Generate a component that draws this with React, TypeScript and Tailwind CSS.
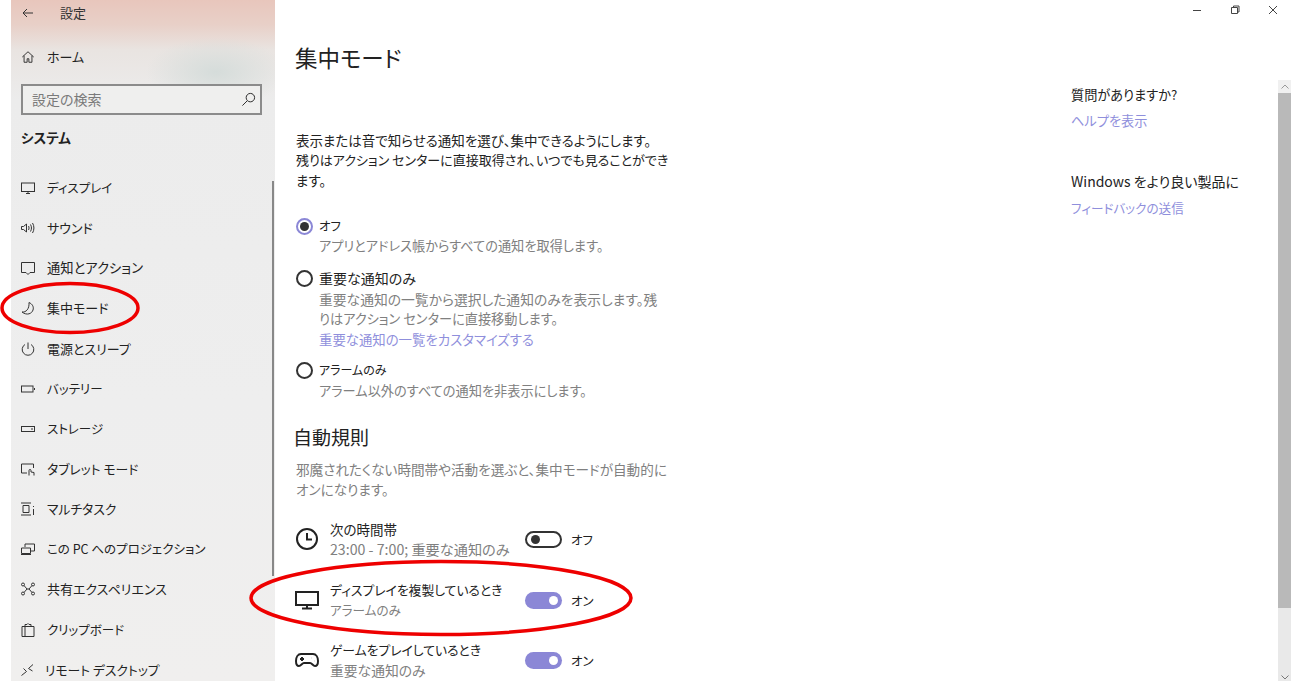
import React from "react";

const font = { fontFamily: '"Noto Sans CJK JP","Noto Sans",sans-serif' };

function I({ children, size = 16, vb = 16, cls = "" }: { children: React.ReactNode; size?: number; vb?: number; cls?: string }) {
  return (
    <svg width={size} height={size} viewBox={`0 0 ${vb} ${vb}`} fill="none" stroke="currentColor" strokeWidth="1" className={cls}>
      {children}
    </svg>
  );
}

const nav: [string, string, React.ReactNode][] = [
  ["ディスプレイ", "text-[12.5px]", <I><rect x="1.5" y="3" width="13" height="8.5" /><path d="M6 13.5h4M8 11.5v2" /></I>],
  ["サウンド", "text-[13px]", <I><path d="M1.5 6.5v3h2l3 2.5V4L3.5 6.5z" /><path d="M8.5 6c.7 1.2.7 2.8 0 4M10.5 4.5c1.3 2.2 1.3 4.8 0 7M12.5 3c1.9 3 1.9 7 0 10" /></I>],
  ["通知とアクション", "text-[13.3px]", <I><path d="M1.5 2.5h13v10H10l-2 2-2-2H1.5z" /></I>],
  ["集中モード", "text-[13px]", <I><path d="M9 2.5C12.5 4 14 7 13 10 12 13.5 7 16 2 12 6 12.5 9.5 9 9 2.5z" /></I>],
  ["電源とスリープ", "text-[13px]", <I><path d="M8 1.5V8" /><path d="M5 3.5a5.8 5.8 0 1 0 6 0" /></I>],
  ["バッテリー", "text-[12.5px]", <I><rect x="1.5" y="5" width="11.5" height="6" /><path d="M14.5 7v2" /></I>],
  ["ストレージ", "text-[12.5px]", <I><rect x="1.5" y="5.5" width="13" height="5" /><path d="M11 8h2" /></I>],
  ["タブレット モード", "text-[12.8px]", <I><path d="M7 12H1.5V3h12v4" /><path d="M9 14.5V9.5a1 1 0 0 1 2 0V11l3 .5v3" /></I>],
  ["マルチタスク", "text-[12.8px]", <I><path d="M1 2h10M1 14h10M3 4.5h6v7H3zM13.5 5v1M13.5 8v6" /></I>],
  ["この PC へのプロジェクション", "text-[12.5px]", <I><path d="M5 6V3h9.5v7H11" /><path d="M1.5 7h9v5.5h-9zM1 13.5h10" /></I>],
  ["共有エクスペリエンス", "text-[13px]", <I><circle cx="3" cy="3.5" r="1.5" /><circle cx="13" cy="3.5" r="1.5" /><circle cx="3" cy="12.5" r="1.5" /><circle cx="13" cy="12.5" r="1.5" /><path d="M4 4.5l3 3.5-3 3.5M12 4.5L9 8l3 3.5M7 8h2" /></I>],
  ["クリップボード", "text-[12.5px]", <I><path d="M2 4.5h12v10H2zM5 4.5V2.5h2l1-1 1 1h2v2M5 4.5v10" /></I>],
  ["リモート デスクトップ", "text-[12.8px] -ml-[2px]", <I><path d="M1.5 13.5l5-4-3-3M13 2.5L8.5 6.5l4 2.5" /></I>],
];

function Row({ icon, title, sub, on, titleCls, subCls }: { icon: React.ReactNode; title: string; sub: string; on: boolean; titleCls: string; subCls: string }) {
  return (
    <div className="flex items-center h-10 w-[320px]">
      <div className="w-[34px] flex items-center text-[#222]">{icon}</div>
      <div className="w-[195px] shrink-0">
        <div className={"leading-[20px] text-[#222] whitespace-nowrap " + titleCls}>{title}</div>
        <div className={"leading-[20px] text-[#808080] whitespace-nowrap " + subCls}>{sub}</div>
      </div>
      <div
        className={
          on
            ? "w-[37px] h-[17px] rounded-full bg-[#8b87d6] flex items-center justify-end pr-[4px]"
            : "w-[37px] h-[17px] rounded-full border-2 border-[#333] flex items-center pl-[4px]"
        }
      >
        <div className={on ? "w-[9px] h-[9px] rounded-full bg-white" : "w-[9px] h-[9px] rounded-full bg-[#333]"} />
      </div>
      <span className="ml-[9px] mt-[2px] text-[12.5px] text-[#222] leading-[20px]">{on ? "オン" : "オフ"}</span>
    </div>
  );
}

function Radio({ on }: { on?: boolean }) {
  return (
    <div
      className={
        on
          ? "w-[17px] h-[17px] rounded-full border-2 border-[#8b87d6] flex items-center justify-center shrink-0"
          : "w-[17px] h-[17px] rounded-full border-2 border-[#333] shrink-0"
      }
    >
      {on && <div className="w-[9px] h-[9px] rounded-full bg-[#333]" />}
    </div>
  );
}

export default function App() {
  return (
    <div
      style={font}
      className="relative w-[1291px] h-[681px] overflow-hidden bg-white flex [font-feature-settings:'palt'] text-[#222]"
    >
      <div className="w-[11px] shrink-0" />
      <aside className="relative w-[264px] shrink-0 h-full bg-[radial-gradient(ellipse_70px_35px_at_205px_72px,#d5dcda_0%,rgba(220,225,224,0)_100%),linear-gradient(180deg,#e8c6bc_0px,#e8d0c8_25px,#e9e4e1_50px,#ececec_100px,#eeeeee_400px,#f0efee_681px)]">
        <div className="flex items-center h-[26px] pl-[11px]">
          <svg width="12" height="12" viewBox="0 0 12 12" fill="none" stroke="#333" strokeWidth="1"><path d="M11 6H1M5 2L1 6l4 4" /></svg>
          <span className="ml-[26px] text-[13px] text-[#333] leading-[20px]">設定</span>
        </div>
        <div className="flex items-center h-[20px] mt-[21px] pl-[10px]">
          <I size={14}><path d="M1.5 8L8 2l6.5 6M3.5 6.5V14H7v-4h2v4h3.5V6.5" /></I>
          <span className="ml-[12px] text-[13px] leading-[20px]">ホーム</span>
        </div>
        <div className="mt-[17px] ml-[10px] w-[241px] h-[31px] border-2 border-[#8b8b8b] bg-[#efefee] flex items-center justify-between pl-[9px] pr-[4px]">
          <span className="text-[14px] text-[#7a7a7a]">設定の検索</span>
          <I size={15}><circle cx="10" cy="6" r="4.5" /><path d="M6.5 9.5L1.5 14.5" /></I>
        </div>
        <div className="mt-[12px] ml-[10px] text-[13.5px] font-bold leading-[20px]">システム</div>
        <nav className="mt-[21px] flex flex-col">
          {nav.map(([t, sz, ic]) => (
            <div key={t} className="h-[40.15px] flex items-center pl-[9px] shrink-0">
              <div className="w-[27px] text-[#333]">{ic}</div>
              <span className={"whitespace-nowrap leading-[20px] " + sz}>{t}</span>
            </div>
          ))}
        </nav>
        <div className="absolute right-[1px] top-[181px] h-[395px] w-[2px] bg-[#888]" />
      </aside>

      <main className="w-[796px] shrink-0 pl-[21px]">
        <h1 className="pt-[37px] -ml-[1px] text-[22.5px] leading-[40px] font-normal">集中モード</h1>
        <div className="mt-[53px] text-[13.5px] leading-[20px] whitespace-nowrap">
          <p>表示または音で知らせる通知を選び、集中できるようにします。</p>
          <p className="text-[13px]">残りはアクション センターに直接取得され、いつでも見ることができ</p>
          <p>ます。</p>
        </div>
        <div className="mt-[26px] flex items-center h-5 gap-[6px]"><Radio on /><span className="text-[12.5px]">オフ</span></div>
        <div className="ml-[23px] text-[13.2px] leading-[20px] text-[#808080] whitespace-nowrap">アプリとアドレス帳からすべての通知を取得します。</div>
        <div className="mt-[12px] flex items-center h-5 gap-[6px]"><Radio /><span className="text-[14px]">重要な通知のみ</span></div>
        <div className="mt-px ml-[23px] leading-[20px] text-[#808080] whitespace-nowrap">
          <div className="text-[13.8px]">重要な通知の一覧から選択した通知のみを表示します。残</div>
          <div className="text-[13.2px]">りはアクション センターに直接移動します。</div>
        </div>
        <div className="ml-[23px] text-[13.4px] leading-[20px] text-[#8f8fdc] whitespace-nowrap">重要な通知の一覧をカスタマイズする</div>
        <div className="mt-[11px] flex items-center h-5 gap-[6px]"><Radio /><span className="text-[12px]">アラームのみ</span></div>
        <div className="mt-px ml-[23px] text-[13.2px] leading-[20px] text-[#808080] whitespace-nowrap">アラーム以外のすべての通知を非表示にします。</div>
        <h2 className="mt-[22px] -ml-[3px] text-[19px] leading-[28px] font-normal">自動規則</h2>
        <p className="mt-[8px] text-[13.6px] leading-[20px] text-[#808080] whitespace-nowrap">
          邪魔されたくない時間帯や活動を選ぶと、集中モードが自動的に
          <br />オンになります。
        </p>
        <div className="mt-[20px]">
          <Row
            on={false}
            title="次の時間帯"
            sub="23:00 - 7:00; 重要な通知のみ"
            titleCls="text-[13.5px]"
            subCls="text-[14.2px]"
            icon={<I size={24} vb={24} cls="-ml-[1px]"><g strokeWidth="2"><circle cx="12" cy="12" r="10" /><path d="M12 6v6.5h5" /></g></I>}
          />
        </div>
        <div className="mt-[21px]">
          <Row
            on
            title="ディスプレイを複製しているとき"
            sub="アラームのみ"
            titleCls="text-[12.8px]"
            subCls="text-[12.6px]"
            icon={<I size={24} vb={24} cls="-ml-[1px]"><g strokeWidth="2"><rect x="1" y="4" width="22" height="13" /><path d="M12 17v3M7 20.5h10" /></g></I>}
          />
        </div>
        <div className="mt-[20px]">
          <Row
            on
            title="ゲームをプレイしているとき"
            sub="重要な通知のみ"
            titleCls="text-[12.8px]"
            subCls="text-[13.8px]"
            icon={<I size={24} vb={24} cls="-ml-[1px]"><g strokeWidth="2"><path d="M6 6h12c3 0 5 3 5 7 0 3-1 5-3 5-2 0-3-3-5-3H9c-2 0-3 3-5 3-2 0-3-2-3-5 0-4 2-7 5-7z" /><path d="M5 11h4M7 9v4M16 10h.1M19 13h.1" /></g></I>}
          />
        </div>
      </main>

      <section className="flex-1 flex flex-col h-full">
        <div className="h-[80px] flex justify-end items-start pt-[5px] pr-[13px] gap-[28px] shrink-0">
          <svg width="10" height="10" viewBox="0 0 10 10" stroke="#444" fill="none"><path d="M1 5.5h8" /></svg>
          <svg width="10" height="10" viewBox="0 0 10 10" stroke="#444" fill="none"><path d="M1.5 2.5h6v6h-6zM3.5 2.5V1H9v6H7.5" /></svg>
          <svg width="10" height="10" viewBox="0 0 10 10" stroke="#444" fill="none"><path d="M1 1l8 8M9 1l-8 8" /></svg>
        </div>
        <div className="flex flex-1 min-h-0">
          <div className="flex-1">
            <div className="mt-[5px] text-[13.2px] leading-[20px]">質問がありますか?</div>
            <div className="mt-[6px] text-[13.2px] leading-[20px] text-[#8f8fdc]">ヘルプを表示</div>
            <div className="mt-[40px] text-[14px] leading-[20px] whitespace-nowrap">Windows をより良い製品に</div>
            <div className="mt-[7px] text-[12.6px] leading-[20px] text-[#8f8fdc]">フィードバックの送信</div>
          </div>
          <div className="w-[13px] shrink-0 flex flex-col bg-[#e9e9e9]">
            <div className="h-[13px] flex items-center justify-center bg-[#f0f0f0]">
              <svg width="8" height="5" viewBox="0 0 8 5" fill="none" stroke="#999"><path d="M.5 4.5L4 1l3.5 3.5" /></svg>
            </div>
            <div className="h-[515px] bg-[#b9b9b9]" />
            <div className="mt-auto h-[6px] flex items-start justify-center">
              <svg width="8" height="5" viewBox="0 0 8 5" fill="none" stroke="#777"><path d="M.5.5L4 4 7.5.5" /></svg>
            </div>
          </div>
        </div>
      </section>

      <svg className="absolute left-0 top-0 pointer-events-none" width="1291" height="681" fill="none" stroke="#ee0000" strokeWidth="3.5">
        <ellipse cx="70" cy="308" rx="68" ry="24.5" />
        <ellipse cx="441" cy="598" rx="190" ry="36.5" />
      </svg>
    </div>
  );
}
